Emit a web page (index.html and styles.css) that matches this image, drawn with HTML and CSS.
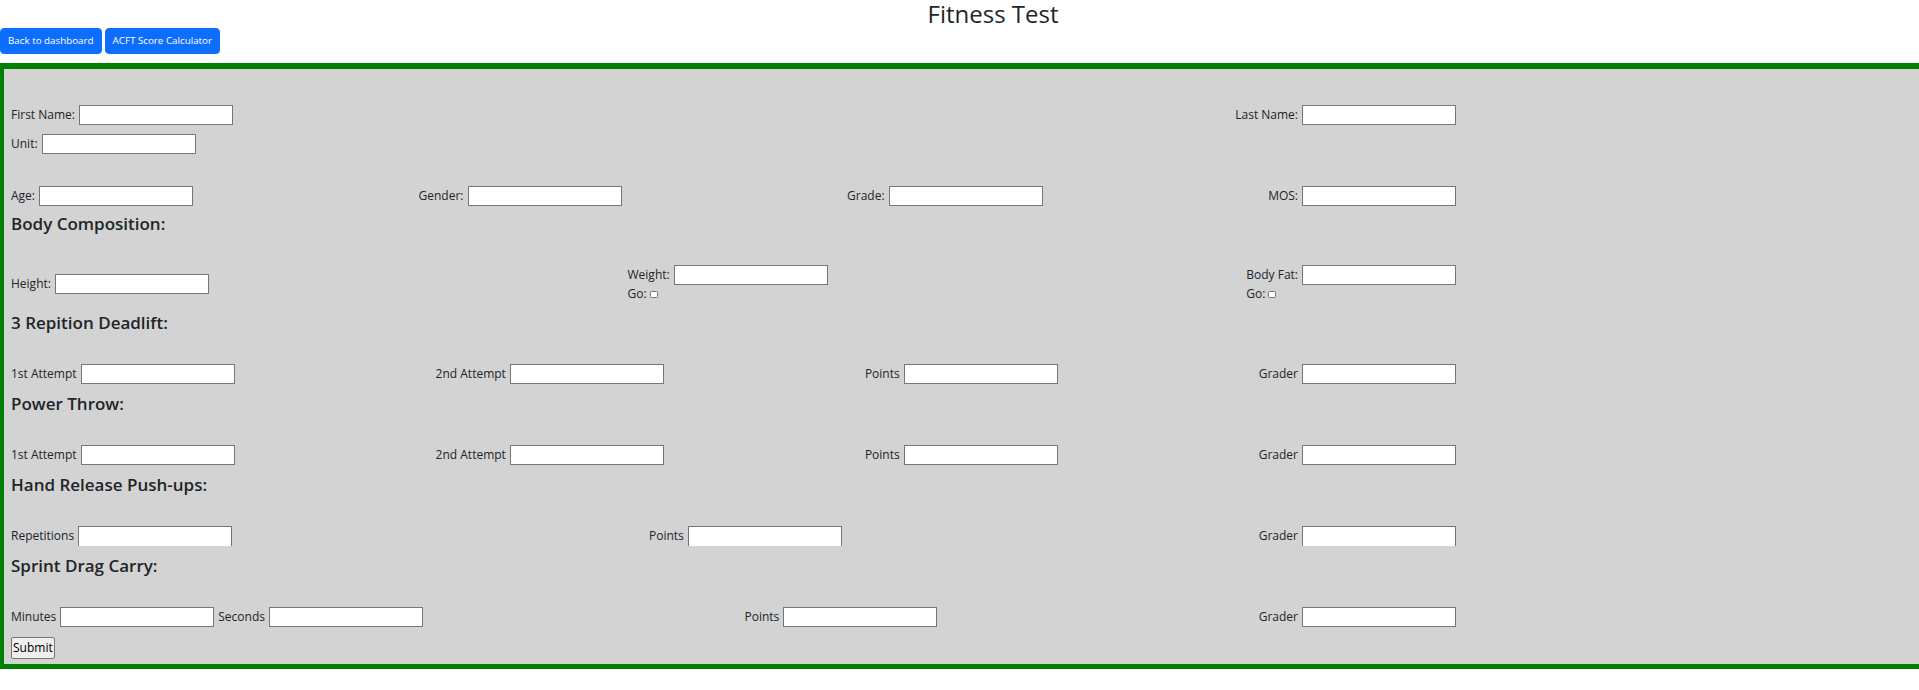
FILE: index.html
```html
<!DOCTYPE html>
<html lang="en">
<head>
<meta charset="utf-8">
<title>Fitness Test</title>
<link rel="stylesheet" href="styles.css">
</head>
<body>
<div class="page">
  <h1 class="page-title">Fitness Test</h1>
  <div class="actions">
    <a class="btn" href="#">Back to dashboard</a>
    <a class="btn" href="#">ACFT Score Calculator</a>
  </div>

  <form class="test-form">
    <div class="field-row row-name">
      <label class="field">First Name:<input type="text"></label>
      <label class="field">Last Name:<input type="text"></label>
    </div>
    <div class="field-row row-unit">
      <label class="field">Unit:<input type="text"></label>
    </div>
    <div class="field-row row-age">
      <label class="field">Age:<input type="text"></label>
      <label class="field">Gender:<input type="text"></label>
      <label class="field">Grade:<input type="text"></label>
      <label class="field">MOS:<input type="text"></label>
    </div>

    <h5 class="section-title first-section">Body Composition:</h5>
    <div class="field-row section-row">
      <label class="field">Height:<input type="text"></label>
      <div class="field-stack">
        <label class="field">Weight:<input type="text"></label>
        <label class="field check">Go:<input type="checkbox"></label>
      </div>
      <div class="field-stack">
        <label class="field">Body Fat:<input type="text"></label>
        <label class="field check">Go:<input type="checkbox"></label>
      </div>
    </div>

    <h5 class="section-title">3 Repition Deadlift:</h5>
    <div class="field-row section-row">
      <label class="field">1st Attempt<input type="text"></label>
      <label class="field">2nd Attempt<input type="text"></label>
      <label class="field">Points<input type="text"></label>
      <label class="field">Grader<input type="text"></label>
    </div>

    <h5 class="section-title">Power Throw:</h5>
    <div class="field-row section-row">
      <label class="field">1st Attempt<input type="text"></label>
      <label class="field">2nd Attempt<input type="text"></label>
      <label class="field">Points<input type="text"></label>
      <label class="field">Grader<input type="text"></label>
    </div>

    <h5 class="section-title">Hand Release Push-ups:</h5>
    <div class="field-row section-row clipped">
      <label class="field">Repetitions<input type="text"></label>
      <label class="field">Points<input type="text"></label>
      <label class="field">Grader<input type="text"></label>
    </div>

    <h5 class="section-title">Sprint Drag Carry:</h5>
    <div class="field-row section-row">
      <div class="field">
        <label>Minutes</label><input type="text">
        <label>Seconds</label><input type="text">
      </div>
      <label class="field">Points<input type="text"></label>
      <label class="field">Grader<input type="text"></label>
    </div>

    <button type="submit" class="submit">Submit</button>
  </form>
</div>
</body>
</html>
```

FILE: styles.css
```css
html {
  overflow: hidden;
}

body {
  margin: 0;
  background: #ffffff;
  color: #212529;
  font-family: "Open Sans", "Noto Sans", sans-serif;
  font-size: 12px;
}

.page {
  width: 1986px;
}

.page-title {
  margin: 0;
  font-size: 24px;
  line-height: 28px;
  font-weight: 500;
  text-align: center;
  color: #212529;
}

.actions {
  display: flex;
  gap: 3px;
  height: 26px;
}

.btn {
  display: inline-block;
  box-sizing: border-box;
  height: 26px;
  padding: 4px 7px;
  border: 1px solid #0d6efd;
  border-radius: 4px;
  background: #0d6efd;
  color: #ffffff;
  font-size: 9.8px;
  line-height: 16px;
  text-decoration: none;
  white-space: nowrap;
}

.test-form {
  margin-top: 9px;
  background: #d3d3d3;
  border-style: solid;
  border-color: #008000;
  border-width: 6px 4px 5px 4px;
  padding: 36px 7px 5px 7px;
}

.field-row {
  display: flex;
  justify-content: space-between;
  align-items: center;
  width: 1445px;
}

.row-unit {
  margin-top: 9px;
}

.row-age {
  margin-top: 32px;
}

.section-row {
  margin-top: 29px;
}

.field {
  display: flex;
  align-items: center;
  gap: 4px;
  white-space: nowrap;
  line-height: 18px;
}

.field input[type="text"] {
  box-sizing: border-box;
  width: 154px;
  height: 20px;
  margin: 0;
  padding: 1px 2px;
  border: 1px solid #767676;
  border-radius: 0;
  background: #ffffff;
  font: inherit;
}

.clipped .field input[type="text"] {
  border-bottom: 0;
}

.field-stack {
  display: flex;
  flex-direction: column;
  align-items: flex-start;
}

.check {
  gap: 3px;
}

.check input[type="checkbox"] {
  appearance: none;
  -webkit-appearance: none;
  box-sizing: border-box;
  width: 8px;
  height: 7px;
  margin: 1px 0 0;
  border: 1px solid #767676;
  border-radius: 1.5px;
  background: #ffffff;
}

.section-title {
  margin: 8px 0;
  font-size: 17px;
  line-height: 24px;
  font-weight: 600;
  color: #212529;
}

.first-section {
  margin-top: 6px;
}

.submit {
  display: block;
  box-sizing: border-box;
  height: 22px;
  margin-top: 10px;
  padding: 1px 1px;
  border: 1px solid #767676;
  border-radius: 2px;
  background: #efefef;
  color: #000000;
  font: inherit;
  font-size: 12px;
  line-height: 18px;
}
```
